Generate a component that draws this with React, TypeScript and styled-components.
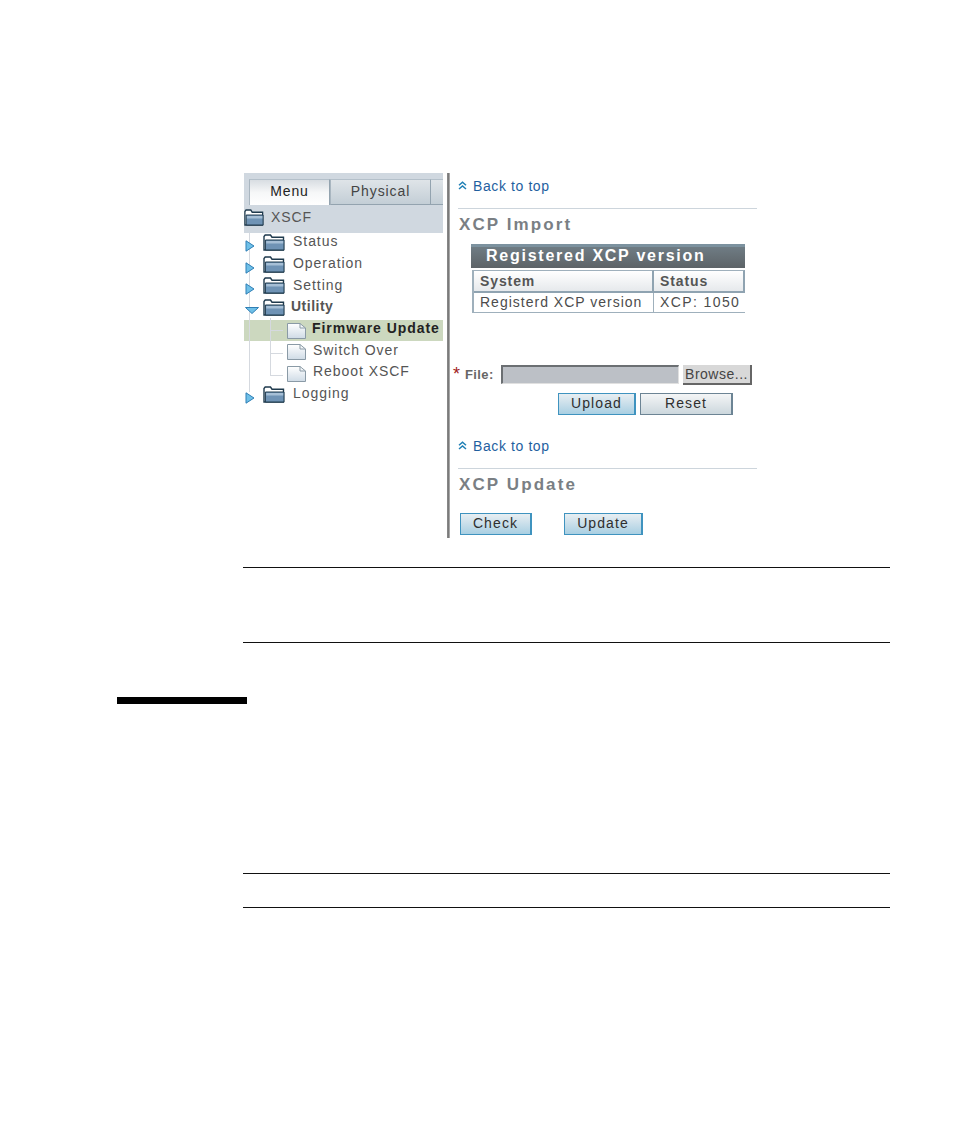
import styled, { createGlobalStyle } from "styled-components";

const GlobalStyle = createGlobalStyle`
  html, body {
    margin: 0;
    padding: 0;
    background: #fff;
  }
`;

const Page = styled.div`
  position: relative;
  width: 954px;
  height: 1145px;
  overflow: hidden;
  padding: 173px 0 0 243px;
  box-sizing: border-box;
  font-family: "Liberation Sans", Arial, sans-serif;
`;

const Figure = styled.div`
  display: flex;
  width: 513px;
  height: 365px;
  margin-left: 1px;
  color: #555;
  font-size: 14px;
  letter-spacing: 0.9px;
`;

const Sidebar = styled.div`
  width: 199px;
  flex: none;
`;

const TabBar = styled.div`
  display: flex;
  align-items: flex-end;
  height: 32px;
  padding-left: 5px;
  background: #d0d8e0;
  box-sizing: border-box;
`;

const Tab = styled.div<{ $active?: boolean }>`
  width: ${(p) => (p.$active ? "81px" : "101px")};
  height: 26px;
  line-height: 23px;
  text-align: center;
  box-sizing: border-box;
  color: ${(p) => (p.$active ? "#222" : "#444")};
  border-top: 1px solid #b4c0ca;
  border-left: 1px solid #a9b6c0;
  border-right: 1px solid #93a3af;
  background: ${(p) =>
    p.$active
      ? "linear-gradient(#d8dde2, #f6f7f8 50%, #fff)"
      : "linear-gradient(#dfe4e8, #c3ced6)"};
  border-bottom: ${(p) => (p.$active ? "none" : "1px solid #93a3af")};
`;

const TabRest = styled.div`
  flex: 1;
  height: 26px;
  box-sizing: border-box;
  border-top: 1px solid #b4c0ca;
  border-bottom: 1px solid #93a3af;
  background: linear-gradient(#dfe4e8, #c3ced6);
`;

const RootRow = styled.div`
  display: flex;
  align-items: center;
  gap: 7px;
  height: 28px;
  padding-bottom: 4px;
  box-sizing: border-box;
  background: #d0d8e0;
  color: #555;
`;

const Tree = styled.div`
  position: relative;
`;

const TreeLine = styled.div<{ $left: number; $top: number; $w: number; $h: number }>`
  position: absolute;
  z-index: 1;
  left: ${(p) => p.$left}px;
  top: ${(p) => p.$top}px;
  width: ${(p) => p.$w}px;
  height: ${(p) => p.$h}px;
  background: #d5d9df;
`;

const Row = styled.div<{ $selected?: boolean; $child?: boolean }>`
  position: relative;
  display: flex;
  align-items: center;
  height: 21.7px;
  padding-left: ${(p) => (p.$child ? "43px" : "1px")};
  background: ${(p) => (p.$selected ? "#ccd8bf" : "transparent")};
`;

const ArrowSlot = styled.span`
  position: relative;
  z-index: 2;
  display: flex;
  width: 18px;
  flex: none;
`;

const RowLabel = styled.span<{ $bold?: boolean; $dark?: boolean; $gap: number }>`
  margin-left: ${(p) => p.$gap}px;
  padding-bottom: 5px;
  white-space: nowrap;
  font-weight: ${(p) => (p.$bold ? 700 : 400)};
  color: ${(p) => (p.$dark ? "#222" : "#555")};
  letter-spacing: ${(p) => (p.$bold ? (p.$dark ? "0.95px" : "0.5px") : "0.95px")};
`;

const Divider = styled.div`
  width: 3px;
  flex: none;
  margin-left: 4px;
  background: linear-gradient(90deg, #8c8c8c, #777 60%, #c9c9c9);
`;

const Content = styled.div`
  flex: 1;
  min-width: 0;
  padding-left: 8px;
`;

const BackLink = styled.div<{ $mt: number }>`
  display: flex;
  align-items: center;
  gap: 6px;
  height: 17px;
  margin-top: ${(p) => p.$mt}px;
  color: #1f5f9f;
  letter-spacing: 0.6px;
`;

const Rule = styled.div<{ $mt: number }>`
  height: 1px;
  margin-top: ${(p) => p.$mt}px;
  background: #cdd5dc;
`;

const Heading = styled.div<{ $mt: number }>`
  margin-top: ${(p) => p.$mt}px;
  margin-left: 1px;
  height: 18px;
  line-height: 18px;
  font-size: 17px;
  font-weight: 700;
  letter-spacing: 2.1px;
  white-space: nowrap;
  color: #7a7f84;
`;

const TableWrap = styled.div`
  width: 274px;
  margin: 10px 0 0 13px;
`;

const TableTitle = styled.div`
  height: 24px;
  line-height: 18px;
  padding-left: 15px;
  font-size: 16px;
  font-weight: 700;
  letter-spacing: 1.75px;
  white-space: nowrap;
  color: #fff;
  border-top: 3px solid #7c929f;
  box-sizing: border-box;
  background: linear-gradient(#6f7c84, #5d6367);
`;

const TableGrid = styled.div`
  display: grid;
  grid-template-columns: 180px 91px;
  margin: 2px 0 0 1px;
  border-left: 2px solid #9fb0bc;
`;

const HeadCell = styled.div`
  height: 23px;
  line-height: 21px;
  padding-left: 6px;
  box-sizing: border-box;
  font-weight: 700;
  letter-spacing: 0.9px;
  color: #555;
  border-top: 1px solid #9fb0bc;
  border-right: 2px solid #8fa3b1;
  border-bottom: 2px solid #8fa3b1;
  background: linear-gradient(#fff, #e6e9ec);
`;

const DataCell = styled.div<{ $last?: boolean }>`
  height: 20px;
  line-height: 19px;
  padding-left: 6px;
  box-sizing: border-box;
  color: #4c4c4c;
  white-space: nowrap;
  letter-spacing: ${(p) => (p.$last ? "1.4px" : "1px")};
  border-right: ${(p) => (p.$last ? "none" : "1px solid #9fb0bc")};
  border-bottom: 1px solid #9fb0bc;
`;

const FileRow = styled.div`
  display: flex;
  align-items: flex-start;
  height: 20px;
  margin: 52px 0 0 -5px;
`;

const Star = styled.span`
  width: 12px;
  flex: none;
  line-height: 1;
  color: #a02020;
  font-size: 18px;
  letter-spacing: 0;
`;

const FileLabel = styled.span`
  width: 36px;
  flex: none;
  line-height: 20px;
  font-size: 13px;
  font-weight: 700;
  letter-spacing: 0.4px;
  color: #666;
`;

const FileInput = styled.div`
  width: 178px;
  height: 19px;
  flex: none;
  box-sizing: border-box;
  background: #bcc0c6;
  border: 2px solid #6b6f72;
  border-right: 1px solid #e0e0e0;
  border-bottom: 1px solid #e0e0e0;
`;

const BrowseButton = styled.div`
  width: 69px;
  height: 20px;
  line-height: 18px;
  margin-left: 4px;
  flex: none;
  box-sizing: border-box;
  text-align: center;
  letter-spacing: 0.5px;
  color: #444;
  background: #d8d8d8;
  border-right: 2px solid #666;
  border-bottom: 2px solid #666;
`;

const ButtonRow = styled.div<{ $ml: number; $mt: number; $gap: number }>`
  display: flex;
  gap: ${(p) => p.$gap}px;
  margin: ${(p) => p.$mt}px 0 0 ${(p) => p.$ml}px;
`;

const ActionButton = styled.div<{ $w: number; $plain?: boolean }>`
  width: ${(p) => p.$w}px;
  height: 22px;
  line-height: 18px;
  box-sizing: border-box;
  text-align: center;
  letter-spacing: 1.1px;
  color: #2f2f2f;
  border: 1px solid ${(p) => (p.$plain ? "#6c8494" : "#3f93bf")};
  border-right-width: 2px;
  background: ${(p) =>
    p.$plain
      ? "linear-gradient(#f4f5f6, #ccd7dd)"
      : "linear-gradient(#e8eef2, #a9cfe2)"};
`;

const Note = styled.div<{ $top: number }>`
  position: absolute;
  left: 243px;
  top: ${(p) => p.$top}px;
  width: 647px;
  height: 1px;
  background: #111;
`;

const SectionBar = styled.div`
  position: absolute;
  left: 117px;
  top: 697px;
  width: 130px;
  height: 7px;
  background: #000;
`;

const Arrow = ({ open }: { open?: boolean }) =>
  open ? (
    <svg width="14" height="9" viewBox="0 0 14 9" style={{ marginTop: 4 }}>
      <path d="M0.5 1.5H13.5L7 7.5Z" fill="#6fc0e8" stroke="#2f7fb5" />
    </svg>
  ) : (
    <svg width="10" height="12" viewBox="0 0 10 12" style={{ marginTop: 4 }}>
      <path d="M1 0.8V11.2L9 6Z" fill="#6fc0e8" stroke="#2f7fb5" />
    </svg>
  );

const Folder = ({ root }: { root?: boolean }) => (
  <svg
    width={root ? 20 : 22}
    height="17"
    viewBox="0 0 22 17"
    preserveAspectRatio="none"
    style={{ flex: "none", marginTop: root ? 0 : -3 }}
  >
    <path d="M1 16V2.5L2.2 1H7.5L9 3.2H20.5V16Z" fill="#fff" stroke="#1f3a4d" strokeWidth="1.4" />
    <path d="M2.4 16V6H21V16Z" fill="#6f93b5" stroke="#1f3a4d" strokeWidth="1" />
    <rect x="3.2" y="7" width="17" height="2.5" fill="#a6bfd6" />
  </svg>
);

const Doc = () => (
  <svg width="19" height="16" viewBox="0 0 19 16" style={{ flex: "none" }}>
    <defs>
      <linearGradient id="docFill" x1="0" y1="0" x2="0" y2="1">
        <stop offset="0" stopColor="#fff" />
        <stop offset="1" stopColor="#cfdbe6" />
      </linearGradient>
    </defs>
    <path d="M0.5 0.5H13L18.5 5V15.5H0.5Z" fill="url(#docFill)" stroke="#8a9aa6" />
    <path d="M13 0.5V5H18.5" fill="none" stroke="#8a9aa6" />
  </svg>
);

const UpIcon = () => (
  <svg width="9" height="9" viewBox="0 0 9 9" style={{ flex: "none" }}>
    <path d="M1 4.2L4.5 1.2L8 4.2M1 8L4.5 5L8 8" fill="none" stroke="#1f7fb5" strokeWidth="1.5" />
  </svg>
);

const folders = ["Status", "Operation", "Setting"];

export default function App() {
  return (
    <>
      <GlobalStyle />
      <Page>
        <Figure>
          <Sidebar>
            <TabBar>
              <Tab $active>Menu</Tab>
              <Tab>Physical</Tab>
              <TabRest />
            </TabBar>
            <RootRow>
              <Folder root />
              <span>XSCF</span>
            </RootRow>
            <Tree>
              <TreeLine $left={5} $top={0} $w={1} $h={159} />
              <TreeLine $left={26} $top={85} $w={1} $h={57} />
              <TreeLine $left={26} $top={97} $w={13} $h={1} />
              <TreeLine $left={26} $top={120} $w={13} $h={1} />
              <TreeLine $left={26} $top={142} $w={13} $h={1} />
              {folders.map((name) => (
                <Row key={name}>
                  <ArrowSlot>
                    <Arrow />
                  </ArrowSlot>
                  <Folder />
                  <RowLabel $gap={8}>{name}</RowLabel>
                </Row>
              ))}
              <Row>
                <ArrowSlot>
                  <Arrow open />
                </ArrowSlot>
                <Folder />
                <RowLabel $gap={6} $bold>
                  Utility
                </RowLabel>
              </Row>
              <Row $child $selected>
                <Doc />
                <RowLabel $gap={6} $bold $dark>
                  Firmware Update
                </RowLabel>
              </Row>
              <Row $child>
                <Doc />
                <RowLabel $gap={7}>Switch Over</RowLabel>
              </Row>
              <Row $child>
                <Doc />
                <RowLabel $gap={7}>Reboot XSCF</RowLabel>
              </Row>
              <Row>
                <ArrowSlot>
                  <Arrow />
                </ArrowSlot>
                <Folder />
                <RowLabel $gap={8}>Logging</RowLabel>
              </Row>
            </Tree>
          </Sidebar>
          <Divider />
          <Content>
            <BackLink $mt={4}>
              <UpIcon />
              Back to top
            </BackLink>
            <Rule $mt={14} />
            <Heading $mt={7}>XCP Import</Heading>
            <TableWrap>
              <TableTitle>Registered XCP version</TableTitle>
              <TableGrid>
                <HeadCell>System</HeadCell>
                <HeadCell>Status</HeadCell>
                <DataCell>Registerd XCP version</DataCell>
                <DataCell $last>XCP: 1050</DataCell>
              </TableGrid>
            </TableWrap>
            <FileRow>
              <Star>*</Star>
              <FileLabel>File:</FileLabel>
              <FileInput />
              <BrowseButton>Browse...</BrowseButton>
            </FileRow>
            <ButtonRow $ml={100} $mt={8} $gap={4}>
              <ActionButton $w={78}>Upload</ActionButton>
              <ActionButton $w={93} $plain>
                Reset
              </ActionButton>
            </ButtonRow>
            <BackLink $mt={22}>
              <UpIcon />
              Back to top
            </BackLink>
            <Rule $mt={14} />
            <Heading $mt={7}>XCP Update</Heading>
            <ButtonRow $ml={2} $mt={19} $gap={32}>
              <ActionButton $w={72}>Check</ActionButton>
              <ActionButton $w={79}>Update</ActionButton>
            </ButtonRow>
          </Content>
        </Figure>
        <Note $top={567} />
        <Note $top={642} />
        <SectionBar />
        <Note $top={873} />
        <Note $top={907} />
      </Page>
    </>
  );
}
